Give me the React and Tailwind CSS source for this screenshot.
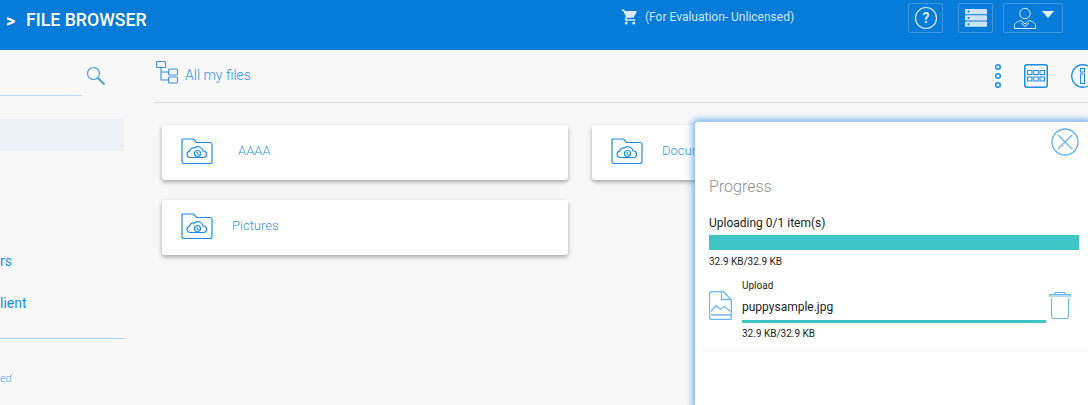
const Folder = () => (
  <svg width="32" height="26" viewBox="0 0 32 26" fill="none" stroke="#1b8ceb" strokeWidth="1.200" className="shrink-0 mb-[3px]">
    <path d="M1 2a1 1 0 0 1 1-1h10.500l3 3.500h13.500a2 2 0 0 1 2 2v17a2 2 0 0 1-2 2h-26a2 2 0 0 1-2-2z" />
    <path d="M9 19.500a3.200 3.200 0 0 1-.5-6.300 4 4 0 0 1 5-3.200 5.200 5.200 0 0 1 8.500 3 3.300 3.300 0 0 1 1 6.500z" />
    <circle cx="16.500" cy="15.500" r="3" />
    <path d="M15.500 14l2 3" />
  </svg>
);

const Card = ({ label, pad }) => (
  <div className="h-[55px] w-[406px] shrink-0 flex items-center pl-[19px] bg-white rounded-[3px] shadow-[0_2px_4px_rgba(0,0,0,0.35)]">
    <Folder />
    <span className={`text-[13px] font-light mb-[4px] text-[#2f94ea] whitespace-nowrap ${pad}`}>{label}</span>
  </div>
);

export default function App() {
  return (
    <div className="relative w-[1088px] h-[405px] overflow-hidden bg-[#f8f8f8] font-['Roboto',sans-serif]">
      <header className="h-[50px] bg-[#067bd8] flex items-start text-white">
        <div className="flex items-center h-[41px] pl-[6px] w-[616px]">
          <span className="text-[18px] font-bold w-[20px]">&gt;</span>
          <span className="text-[17.7px] font-medium">FILE BROWSER</span>
        </div>
        <div className="flex items-center h-[34px] w-[292px] text-[#cfe5f8]">
          <svg width="18" height="18" viewBox="0 0 24 24" fill="#d9ebfa" className="ml-[5px] mr-[6px]">
            <path d="M7 18a2 2 0 1 0 0 4 2 2 0 0 0 0-4zM1 2v2h2l3.600 7.600-1.350 2.450A2 2 0 0 0 7 17h12v-2H7.420a.25.25 0 0 1-.25-.25l.03-.12L8.100 13h7.450c.75 0 1.410-.41 1.750-1.030l3.580-6.490A1 1 0 0 0 20 4H5.210l-.94-2zm16 16a2 2 0 1 0 0 4 2 2 0 0 0 0-4z" />
          </svg>
          <span className="text-[12px] whitespace-nowrap">(For Evaluation- Unlicensed)</span>
        </div>
        <div className="flex mt-[3px] gap-[15px]">
          <div className="w-[35px] h-[30px] border border-[#3b97e0] rounded-[2px] flex items-center justify-center">
            <svg width="24" height="24" viewBox="0 0 24 24" fill="none">
              <circle cx="12" cy="12" r="10.500" stroke="#d9ebfa" strokeWidth="1.200" />
              <text x="12" y="17" textAnchor="middle" fontSize="14" fontWeight="700" fill="#d9ebfa" fontFamily="Roboto">?</text>
            </svg>
          </div>
          <div className="w-[35px] h-[30px] border border-[#3b97e0] rounded-[2px] flex items-center justify-center">
            <svg width="24" height="20" viewBox="0 0 24 20">
              <g fill="#cfe4f8">
                <rect x="1" y="1" width="22" height="5.200" rx="1" />
                <rect x="1" y="7.300" width="22" height="5.200" rx="1" />
                <rect x="1" y="13.600" width="22" height="5.200" rx="1" />
              </g>
              <g fill="#067bd8">
                <circle cx="4.500" cy="3.600" r="1" />
                <circle cx="4.500" cy="9.900" r="1" />
                <circle cx="4.500" cy="16.200" r="1" />
              </g>
            </svg>
          </div>
          <div className="-ml-[5px] w-[60px] h-[30px] border border-[#3b97e0] rounded-[2px] flex items-center pl-[9px]">
            <svg width="24" height="24" viewBox="0 0 24 24" fill="none" stroke="#d9ebfa" strokeWidth="1">
              <circle cx="12" cy="7.500" r="5.200" />
              <path d="M1.500 22.500v-3c0-2.500 3-4 6.500-5l4 3.500 4-3.500c3.500 1 6.500 2.500 6.500 5v3z" />
              <path d="M8 17l4 3.500 4-3.500" />
            </svg>
            <svg width="12" height="7" viewBox="0 0 12 7" fill="#e6f1fb" className="ml-[5px] mb-[7px]">
              <path d="M0 0h12L6 7z" />
            </svg>
          </div>
        </div>
      </header>

      <div className="flex">
        <aside className="w-[124px] shrink-0 mr-[31px] flex flex-col">
          <div className="h-[46px] border-b border-[#bcdcf6] w-[82px] flex justify-end items-center relative">
            <svg width="20" height="20" viewBox="0 0 20 20" fill="none" stroke="#4a9fe6" className="absolute left-[86px] top-[16px]">
              <circle cx="7.500" cy="7.500" r="6" strokeWidth="1.200" />
              <path d="M12 12l6.500 6.500" strokeWidth="2" />
            </svg>
          </div>
          <div className="h-[32px] mt-[23px] bg-[#edf2f9]" />
          <div className="mt-[98px] h-[24px] flex items-center text-[14px] text-[#1b8ceb]">rs</div>
          <div className="mt-[18px] h-[24px] flex items-center text-[14px] text-[#1b8ceb]">lient</div>
          <div className="mt-[23px] border-b border-[#a5d4f8]" />
          <div className="mt-[32px] text-[11px] font-light italic text-[#3f9ceb]">ed</div>
        </aside>

        <main className="flex-1 min-w-0">
          <div className="h-[53px] border-b border-[#dedede] flex items-center">
            <svg width="23" height="24" viewBox="0 0 23 24" fill="none" stroke="#3d90e0" strokeWidth="1.100" className="mb-[6px] ml-[1px]">
              <rect x="0.500" y="0.500" width="9" height="6" rx="1" />
              <rect x="12.500" y="8" width="9" height="6" rx="1" />
              <rect x="12.500" y="16" width="9" height="6" rx="1" />
              <path d="M5 7v12h7.500M5 11h7.500" />
            </svg>
            <span className="ml-[6px] mb-[1px] text-[14px] font-light text-[#2f94ea]">All my files</span>
            <div className="ml-auto flex items-center">
              <svg width="8" height="26" viewBox="0 0 8 26" fill="none" stroke="#1b8ceb" strokeWidth="1.500" className="mr-[22px]">
                <circle cx="4" cy="4" r="2.300" />
                <circle cx="4" cy="13" r="2.300" />
                <circle cx="4" cy="22" r="2.300" />
              </svg>
              <svg width="24" height="24" viewBox="0 0 24 24" fill="none" stroke="#1b8ceb" className="mr-[23px]">
                <rect x="0.750" y="0.750" width="22.500" height="22.500" rx="2" strokeWidth="1.500" />
                <rect x="3.500" y="6.500" width="4.500" height="4" />
                <rect x="9.800" y="6.500" width="4.500" height="4" />
                <rect x="16" y="6.500" width="4.500" height="4" />
                <rect x="3.500" y="13" width="4.500" height="4" />
                <rect x="9.800" y="13" width="4.500" height="4" />
                <rect x="16" y="13" width="4.500" height="4" />
              </svg>
              <svg width="24" height="24" viewBox="0 0 24 24" fill="none" stroke="#1b8ceb" className="-mr-[7px]">
                <circle cx="12" cy="12" r="11.250" strokeWidth="1.300" />
                <rect x="9.500" y="4.500" width="4" height="3.500" />
                <rect x="9.500" y="10" width="4" height="9.500" />
              </svg>
            </div>
          </div>
          <div className="pl-[7px] pt-[22px] flex flex-col gap-[20px]">
            <div className="flex gap-[24px]">
              <Card label="AAAA" pad="ml-[25px]" />
              <Card label="Documents" pad="ml-[19px]" />
            </div>
            <Card label="Pictures" pad="ml-[19px]" />
          </div>
        </main>
      </div>

      <section className="absolute left-[695px] top-[122px] right-0 bottom-0 bg-white rounded-tl-[3px] shadow-[0_0_6px_3px_rgba(50,140,230,0.6)] text-[#1c1c1c] flex flex-col">
        <div className="flex justify-end pt-[6px] pr-[9px]">
          <svg width="28" height="28" viewBox="0 0 28 28" fill="none" stroke="#62b0f0">
            <circle cx="14" cy="14" r="13" strokeWidth="1.300" />
            <path d="M7 7l14 14M21 7L7 21" strokeWidth="1.100" />
          </svg>
        </div>
        <div className="pl-[14px] pr-[9px]">
          <h2 className="mt-[21px] text-[16px] leading-[20px] text-[#8f8f8f] font-light">Progress</h2>
          <p className="mt-[18px] text-[12px] leading-[16px]">Uploading 0/1 item(s)</p>
          <div className="mt-[4px] h-[15px] bg-[#40c5c5]" />
          <p className="mt-[6px] text-[10px] leading-[12px]">32.9 KB/32.9 KB</p>
        </div>
        <div className="mt-[12px] ml-[8px] pl-[6px] h-[71px] border-b border-[#efefef] flex">
          <svg width="23" height="29" viewBox="0 0 23 29" fill="none" stroke="#6db7f4" strokeWidth="1.300" className="mt-[11px] shrink-0">
            <path d="M2.500.7h12l7.800 8v17.800a2 2 0 0 1-2 2h-17.800a2 2 0 0 1-2-2v-23.800a2 2 0 0 1 2-2z" />
            <path d="M12.500 1v7.500h9.500" />
            <path d="M2 20.500l5-6 4.500 4 4-3 6 5M2 24h20" />
          </svg>
          <div className="ml-[10px] w-[304px]">
            <p className="text-[10px] leading-[12px]">Upload</p>
            <p className="mt-[8px] text-[12px] leading-[14px]">puppysample.jpg</p>
            <div className="mt-[6px] h-[3px] bg-[#40c5c5]" />
            <p className="mt-[5px] text-[10px] leading-[12px]">32.9 KB/32.9 KB</p>
          </div>
          <svg width="22" height="28" viewBox="0 0 22 28" fill="none" stroke="#6db7f4" strokeWidth="1.200" className="ml-[3px] mt-[11px]">
            <path d="M.5 3.500h21M.5 3.500v1.500h21V3.500M6 3V1.500h10V3" />
            <path d="M2.500 7v18a2.500 2.500 0 0 0 2.500 2.500h12a2.500 2.500 0 0 0 2.500-2.500V7" />
          </svg>
        </div>
      </section>
    </div>
  );
}
